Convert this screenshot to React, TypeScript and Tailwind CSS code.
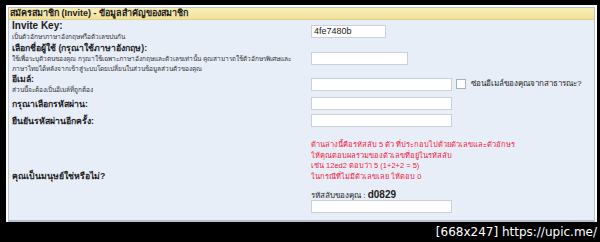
import React from "react"

const thai = "font-['Tahoma','Liberation_Sans','DejaVu_Sans',sans-serif]"

function Field({ w = "w-[141px]", value = "" }: { w?: string; value?: string }) {
  return (
    <div
      className={`${w} h-[13px] bg-white border border-[#c9d0da] text-[9px] leading-[11px] px-[2px] text-[#222] font-['Liberation_Sans',sans-serif]`}
    >
      {value}
    </div>
  )
}

function Label({ title, subs = [], latin = false }: { title: string; subs?: string[]; latin?: boolean }) {
  return (
    <div className="pl-[3px]">
      <div className={`${latin ? "text-[10px]" : "text-[8.7px]"} leading-[12px] font-bold text-[#1c1c1c]`}>{title}</div>
      {subs.map((s) => (
        <div key={s} className="text-[6.5px] leading-[10px] text-[#333] whitespace-nowrap">
          {s}
        </div>
      ))}
    </div>
  )
}

export default function App() {
  return (
    <div className={`w-[600px] h-[242px] bg-black overflow-hidden ${thai}`}>
      <div className="ml-[6px] mt-[5px] w-[591px] h-[217px] bg-white p-[2px] pb-0">
        <div className="h-full border border-[#b9c3d1] bg-[#e8eef8] flex flex-col">
          {/* header */}
          <div className="h-[12px] shrink-0 bg-gradient-to-b from-[#f8eeb8] to-[#f1e29a] border-b border-[#e0d08a] flex items-center pl-[1px]">
            <span className="text-[9px] font-bold text-[#1c1c1c] leading-none">
              สมัครสมาชิก (Invite) - ข้อมูลสำคัญของสมาชิก
            </span>
          </div>

          {/* invite key */}
          <div className="h-[22px] grid grid-cols-[302px_1fr] items-center">
            <Label latin title="Invite Key:" subs={["เป็นตัวอักษรภาษาอังกฤษหรือตัวเลขปนกัน"]} />
            <Field w="w-[75px]" value="4fe7480b" />
          </div>

          {/* username */}
          <div className="h-[31px] grid grid-cols-[302px_1fr] items-center">
            <Label
              title="เลือกชื่อผู้ใช้ (กรุณาใช้ภาษาอังกฤษ):"
              subs={[
                "ใช้เพื่อระบุตัวตนของคุณ กรุณาใช้เฉพาะภาษาอังกฤษและตัวเลขเท่านั้น คุณสามารถใช้ตัวอักษรพิเศษและ",
                "ภาษาไทยได้หลังจากเข้าสู่ระบบโดยเปลี่ยนในส่วนข้อมูลส่วนตัวของคุณ",
              ]}
            />
            <Field w="w-[97px]" />
          </div>

          {/* email */}
          <div className="h-[17px] grid grid-cols-[302px_1fr] items-center">
            <Label title="อีเมล์:" subs={["ส่วนนี้จะต้องเป็นอีเมล์ที่ถูกต้อง"]} />
            <div className="flex items-center">
              <Field />
              <div className="ml-[4px] w-[10px] h-[10px] bg-white border border-[#a9b1bc]" />
              <span className="ml-[5px] text-[8px] text-[#222]">ซ่อนอีเมล์ของคุณจากสาธารณะ?</span>
            </div>
          </div>

          {/* password */}
          <div className="mt-[5px] h-[17px] grid grid-cols-[302px_1fr] items-center">
            <Label title="กรุณาเลือกรหัสผ่าน:" />
            <Field />
          </div>

          <div className="h-[17px] grid grid-cols-[302px_1fr] items-center">
            <Label title="ยืนยันรหัสผ่านอีกครั้ง:" />
            <Field />
          </div>

          {/* captcha */}
          <div className="flex-1 grid grid-cols-[302px_1fr] border-b border-[#b0bac8]">
            <div className="self-center pt-[2px]">
              <Label title="คุณเป็นมนุษย์ใช่หรือไม่?" />
            </div>
            <div className="pt-[11px]">
              <div className="text-[7.5px] leading-[10.5px] text-[#f0203a] whitespace-nowrap">
                <div>ด้านล่างนี้คือรหัสลับ 5 ตัว ที่ประกอบไปด้วยตัวเลขและตัวอักษร</div>
                <div>ให้คุณตอบผลรวมของตัวเลขที่อยู่ในรหัสลับ</div>
                <div>เช่น 12ed2 ตอบว่า 5 (1+2+2 = 5)</div>
                <div>ในกรณีที่ไม่มีตัวเลขเลย ให้ตอบ 0</div>
              </div>
              <div className="mt-[7px] h-[11px] text-[8px] leading-[11px] text-[#222]">
                รหัสลับของคุณ : <span className="font-bold text-[10px]">d0829</span>
              </div>
              <Field />
            </div>
          </div>
        </div>
      </div>

      {/* bottom watermark */}
      <div className="flex justify-end pr-[3px] mt-[1px]">
        <span className="text-white text-[12px] leading-[18px] font-['DejaVu_Sans',sans-serif]">
          [668x247] https://upic.me/
        </span>
      </div>
    </div>
  )
}
